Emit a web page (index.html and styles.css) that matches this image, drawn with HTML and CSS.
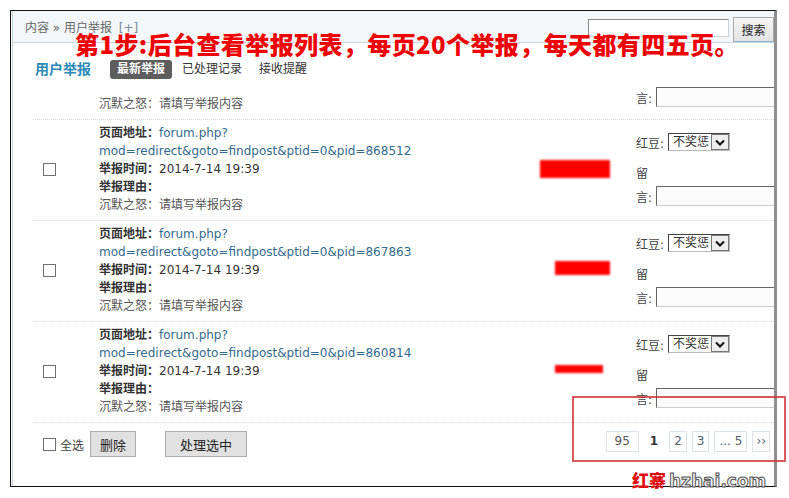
FILE: index.html
```html
<!DOCTYPE html>
<html>
  <head>
    <meta charset="utf-8">
    <title>用户举报</title>
    <link rel="stylesheet" href="styles.css">
  </head>

  <body>
    <div class="shot">
      <div class="frame">
        <div class="inner">
          <div class="topbar">
            <div class="crumb">内容 &raquo; 用户举报 <span class="plus">[+]</span></div>
            <div class="search">
              <input type="text" class="search-input">
              <button class="search-btn">搜索</button>
            </div>
          </div>

          <div class="nav">
            <h3>用户举报</h3>
            <a class="tab current">最新举报</a>
            <a class="tab">已处理记录</a>
            <a class="tab">接收提醒</a>
          </div>

          <div class="list">
            <div class="row row-tail">
              <div class="cb-cell"></div>
              <div class="info">
                <p class="note">沉默之怒：请填写举报内容</p>
              </div>
              <div class="mask"></div>
              <div class="award">
                <div class="msg msg-tail">言: <input type="text"></div>
              </div>
            </div>

            <div class="row">
              <div class="cb-cell"><input type="checkbox" class="check"></div>
              <div class="info">
                <p><b>页面地址：</b><a>forum.php?<br>mod=redirect&amp;goto=findpost&amp;ptid=0&amp;pid=868512</a></p>
                <p><b>举报时间：</b>2014-7-14 19:39</p>
                <p><b>举报理由：</b></p>
                <p class="note">沉默之怒：请填写举报内容</p>
              </div>
              <div class="mask"><div class="bar bar-a"></div></div>
              <div class="award">
                <div class="bean">红豆:
                  <span class="select"><span class="select-text">不奖惩</span><span class="select-arrow"><svg width="10" height="7" viewBox="0 0 10 7"><path d="M1 1.5 L5 5.5 L9 1.5" fill="none" stroke="#111" stroke-width="2"/></svg></span></span>
                </div>
                <div class="leave">留</div>
                <div class="msg">言: <input type="text"></div>
              </div>
            </div>

            <div class="row">
              <div class="cb-cell"><input type="checkbox" class="check"></div>
              <div class="info">
                <p><b>页面地址：</b><a>forum.php?<br>mod=redirect&amp;goto=findpost&amp;ptid=0&amp;pid=867863</a></p>
                <p><b>举报时间：</b>2014-7-14 19:39</p>
                <p><b>举报理由：</b></p>
                <p class="note">沉默之怒：请填写举报内容</p>
              </div>
              <div class="mask"><div class="bar bar-b"></div></div>
              <div class="award">
                <div class="bean">红豆:
                  <span class="select"><span class="select-text">不奖惩</span><span class="select-arrow"><svg width="10" height="7" viewBox="0 0 10 7"><path d="M1 1.5 L5 5.5 L9 1.5" fill="none" stroke="#111" stroke-width="2"/></svg></span></span>
                </div>
                <div class="leave">留</div>
                <div class="msg">言: <input type="text"></div>
              </div>
            </div>

            <div class="row">
              <div class="cb-cell"><input type="checkbox" class="check"></div>
              <div class="info">
                <p><b>页面地址：</b><a>forum.php?<br>mod=redirect&amp;goto=findpost&amp;ptid=0&amp;pid=860814</a></p>
                <p><b>举报时间：</b>2014-7-14 19:39</p>
                <p><b>举报理由：</b></p>
                <p class="note">沉默之怒：请填写举报内容</p>
              </div>
              <div class="mask"><div class="bar bar-c"></div></div>
              <div class="award">
                <div class="bean">红豆:
                  <span class="select"><span class="select-text">不奖惩</span><span class="select-arrow"><svg width="10" height="7" viewBox="0 0 10 7"><path d="M1 1.5 L5 5.5 L9 1.5" fill="none" stroke="#111" stroke-width="2"/></svg></span></span>
                </div>
                <div class="leave">留</div>
                <div class="msg">言: <input type="text"></div>
              </div>
            </div>
          </div>

          <div class="footer">
            <div class="actions">
              <input type="checkbox" class="check">
              <span class="all">全选</span>
              <button class="btn btn-del">删除</button>
              <button class="btn btn-go">处理选中</button>
            </div>
            <div class="pager">
              <a class="page wide">95</a>
              <strong class="page now">1</strong>
              <a class="page">2</a>
              <a class="page">3</a>
              <a class="page">... 5</a>
              <a class="page next">&rsaquo;&rsaquo;</a>
            </div>
          </div>
        </div>
      </div>

      <!-- annotations drawn over the screenshot -->
      <div class="step">第1步:后台查看举报列表，每页20个举报，每天都有四五页。</div>
      <div class="mark"></div>
      <div class="logo"><span class="logo-cn">红寨</span><span class="logo-en">hzhai.com</span></div>
    </div>
  </body>
</html>
```

FILE: styles.css
```css
body {
  margin: 0;
  background: #fff;
  color: #333;
  font-family: "DejaVu Sans", "Noto Sans CJK SC", sans-serif;
  font-size: 12px;
}

.shot {
  position: relative;
  width: 789px;
  height: 498px;
  overflow: hidden;
}

.frame {
  margin: 10px 0 0 10px;
  width: 762px;
  height: 475px;
  padding-left: 1px;
  border: 1px solid #111;
  border-right: 3px solid #8f8f8f;
  overflow: hidden;
}

.inner {
  height: 100%;
  border-left: 1px solid #c3d1da;
}

/* top bar */
.topbar {
  display: flex;
  justify-content: space-between;
  align-items: center;
  height: 31px;
  padding-left: 12px;
  background: #f3f7fa;
  border-bottom: 1px solid #c9d6de;
}

.crumb {
  color: #666;
}

.plus {
  margin-left: 3px;
  color: #7a8a96;
}

.search {
  display: flex;
  align-self: flex-start;
  gap: 4px;
  margin-top: 6px;
}

.search-input {
  width: 141px;
  height: 18px;
  margin-top: 2px;
  padding: 0;
  box-sizing: border-box;
  border: 1px solid;
  border-color: #8a8a8a #d0d0d0 #d0d0d0 #8a8a8a;
  background: #fff;
}

.search-btn {
  width: 41px;
  height: 25px;
  padding: 0;
  box-sizing: border-box;
  border: 1px solid #a9a9a9;
  border-bottom-color: #8cb6d2;
  background: linear-gradient(#f6f6f6, #e3e3e3);
  color: #222;
  font-family: "DejaVu Sans", "Noto Sans CJK SC", sans-serif;
  font-size: 12px;
}

/* nav */
.nav {
  display: flex;
  align-items: center;
  padding: 17px 0 8px 22px;
}

.nav h3 {
  margin: 0 19px 0 0;
  font-size: 14px;
  line-height: 19px;
  color: #2a8ab8;
}

.tab {
  padding: 0 7px;
  margin-right: 3px;
  line-height: 19px;
  color: #333;
}

.tab.current {
  background: #5d5d5d;
  color: #fff;
  border-radius: 3px;
  font-weight: bold;
}

/* report rows */
.list {
  margin-left: 20px;
}

.row {
  display: grid;
  grid-template-columns: 66px 441px 96px minmax(0, 1fr);
  padding: 4px 0 6px;
  border-bottom: 1px dotted #d3dade;
}

.row-tail {
  padding-top: 0;
}

.row-tail .note {
  margin-top: 8px;
}

.cb-cell {
  display: flex;
  align-items: center;
  padding-left: 10px;
}

.check {
  appearance: none;
  width: 13px;
  height: 13px;
  margin: 0;
  border: 1px solid #707070;
  background: #fff;
}

.info p {
  margin: 0;
  line-height: 18px;
}

.info a {
  color: #336b8d;
}

.note {
  color: #555;
}

.bar {
  background: #ff0000;
  filter: blur(1px);
}

.bar-a {
  width: 70px;
  height: 18px;
  margin-top: 36px;
}

.bar-b {
  width: 55px;
  height: 14px;
  margin: 36px 0 0 15px;
}

.bar-c {
  width: 48px;
  height: 8px;
  margin: 39px 0 0 15px;
}

.award {
  color: #444;
  white-space: nowrap;
}

.bean {
  display: flex;
  align-items: center;
  gap: 4px;
  height: 24px;
  margin-top: 6px;
}

.select {
  display: inline-flex;
  width: 62px;
  height: 18px;
  box-sizing: border-box;
  border: 1px solid;
  border-color: #444 #bbb #bbb #444;
  background: #fff;
}

.select-text {
  flex: 1;
  padding-left: 4px;
  overflow: hidden;
  line-height: 16px;
  color: #333;
}

.select-arrow {
  display: flex;
  align-items: center;
  justify-content: center;
  width: 18px;
  box-sizing: border-box;
  border: 1px solid #777;
  background: #eeeeee;
}

.leave {
  margin-top: 11px;
  line-height: 18px;
}

.msg {
  display: flex;
  align-items: center;
  gap: 4px;
  height: 20px;
  margin-top: 3px;
}

.msg-tail {
  margin-top: 0;
}

.msg input {
  flex: none;
  width: 130px;
  height: 20px;
  padding: 0;
  box-sizing: border-box;
  border: 1px solid;
  border-color: #666 #ccc #ccc #666;
  background: #fbfbfb;
}

/* footer */
.footer {
  display: flex;
  align-items: flex-start;
  padding: 8px 0 0 30px;
}

.actions {
  display: flex;
  align-items: center;
  height: 26px;
}

.all {
  margin-left: 4px;
  color: #444;
}

.btn {
  height: 26px;
  padding: 0;
  border: 1px solid #adadad;
  background: #e1e1e1;
  color: #222;
  font-family: "DejaVu Sans", "Noto Sans CJK SC", sans-serif;
  font-size: 13px;
}

.btn-del {
  width: 46px;
  margin-left: 6px;
}

.btn-go {
  width: 82px;
  margin-left: 29px;
}

.pager {
  display: flex;
  gap: 5px;
  margin-left: auto;
  margin-right: 4px;
}

.page {
  height: 21px;
  padding: 0 4px;
  box-sizing: border-box;
  border: 1px solid #dde3e8;
  line-height: 19px;
  color: #4f6170;
}

.page.wide {
  padding: 0 8px;
  color: #555;
}

.page.now {
  border-color: transparent;
  padding: 0 5px;
  color: #333;
}

.page.next {
  padding: 0 3px;
}

/* annotations */
.step {
  position: absolute;
  left: 75px;
  top: 29px;
  font-family: "Noto Sans CJK SC", sans-serif;
  font-weight: 900;
  font-size: 24px;
  letter-spacing: 0.4px;
  line-height: 30px;
  color: #ee0000;
  white-space: nowrap;
}

.mark {
  position: absolute;
  left: 572px;
  top: 396px;
  width: 214px;
  height: 66px;
  box-sizing: border-box;
  border: 2px solid rgba(205, 50, 50, 0.8);
}

.logo {
  position: absolute;
  left: 632px;
  top: 467px;
  display: flex;
  align-items: baseline;
  gap: 3px;
}

.logo-cn {
  font-family: "Noto Sans CJK SC", sans-serif;
  font-weight: 900;
  font-size: 17px;
  color: #e01010;
}

.logo-en {
  font-family: "DejaVu Sans", sans-serif;
  font-weight: bold;
  font-size: 17px;
  color: #f0f0f0;
  -webkit-text-stroke: 1px #555;
}
```
